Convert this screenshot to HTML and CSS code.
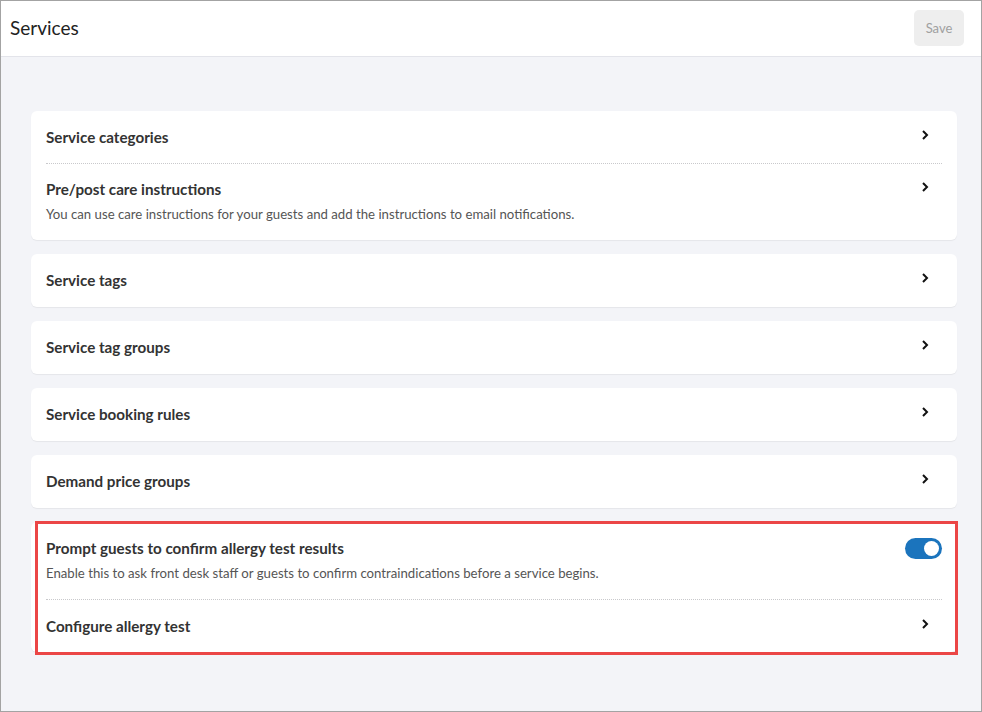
FILE: index.html
```html
<!DOCTYPE html>
<html lang="en">
<head>
    <meta charset="UTF-8">
    <meta name="viewport" content="width=device-width, initial-scale=1.0">
    <title>Services | Settings</title>
    <link rel="stylesheet" href="styles.css">
</head>
<body>
    <div class="frame">
        <header class="page-header">
            <h1>Services</h1>
            <button class="btn btn-save" disabled>Save</button>
        </header>

        <main class="content">
            <section class="card">
                <a class="row" href="#">
                    <div class="row-text">
                        <span class="row-title">Service categories</span>
                    </div>
                    <svg class="chevron" width="8" height="10" viewBox="0 0 8 10" aria-hidden="true"><polyline points="2,1 6,5 2,9" /></svg>
                </a>
                <a class="row" href="#">
                    <div class="row-text">
                        <span class="row-title">Pre/post care instructions</span>
                        <span class="row-desc">You can use care instructions for your guests and add the instructions to email notifications.</span>
                    </div>
                    <svg class="chevron" width="8" height="10" viewBox="0 0 8 10" aria-hidden="true"><polyline points="2,1 6,5 2,9" /></svg>
                </a>
            </section>

            <section class="card">
                <a class="row" href="#">
                    <div class="row-text">
                        <span class="row-title">Service tags</span>
                    </div>
                    <svg class="chevron" width="8" height="10" viewBox="0 0 8 10" aria-hidden="true"><polyline points="2,1 6,5 2,9" /></svg>
                </a>
            </section>

            <section class="card">
                <a class="row" href="#">
                    <div class="row-text">
                        <span class="row-title">Service tag groups</span>
                    </div>
                    <svg class="chevron" width="8" height="10" viewBox="0 0 8 10" aria-hidden="true"><polyline points="2,1 6,5 2,9" /></svg>
                </a>
            </section>

            <section class="card">
                <a class="row" href="#">
                    <div class="row-text">
                        <span class="row-title">Service booking rules</span>
                    </div>
                    <svg class="chevron" width="8" height="10" viewBox="0 0 8 10" aria-hidden="true"><polyline points="2,1 6,5 2,9" /></svg>
                </a>
            </section>

            <section class="card">
                <a class="row" href="#">
                    <div class="row-text">
                        <span class="row-title">Demand price groups</span>
                    </div>
                    <svg class="chevron" width="8" height="10" viewBox="0 0 8 10" aria-hidden="true"><polyline points="2,1 6,5 2,9" /></svg>
                </a>
            </section>

            <section class="card card-highlight">
                <div class="row row-toggle">
                    <div class="row-text">
                        <span class="row-title">Prompt guests to confirm allergy test results</span>
                        <span class="row-desc">Enable this to ask front desk staff or guests to confirm contraindications before a service begins.</span>
                    </div>
                    <label class="switch">
                        <input type="checkbox" checked aria-label="Prompt guests to confirm allergy test results">
                        <span class="slider"></span>
                    </label>
                </div>
                <a class="row" href="#">
                    <div class="row-text">
                        <span class="row-title">Configure allergy test</span>
                    </div>
                    <svg class="chevron" width="8" height="10" viewBox="0 0 8 10" aria-hidden="true"><polyline points="2,1 6,5 2,9" /></svg>
                </a>
            </section>
        </main>
    </div>
</body>
</html>
```

FILE: styles.css
```css
:root {
    --page-bg: #f3f4f8;
    --text-color: #333333;
    --muted-text: #555555;
    --divider: #c9c9cc;
    --toggle-on: #1b74bd;
    --highlight: #eb4646;
}

* {
    box-sizing: border-box;
}

body {
    margin: 0;
    font-family: 'Lato', 'Open Sans', sans-serif;
    color: var(--text-color);
    background-color: #ffffff;
}

.frame {
    height: 712px;
    border: 1px solid #a3a3a3;
    background-color: var(--page-bg);
    overflow: hidden;
}

.page-header {
    display: flex;
    justify-content: space-between;
    align-items: center;
    height: 56px;
    padding: 0 17px 2px 9px;
    background-color: #ffffff;
    border-bottom: 1px solid #e3e4ea;
}

.page-header h1 {
    margin: 0;
    font-size: 19px;
    font-weight: 400;
    color: #222222;
}

.btn {
    font-family: inherit;
    border: none;
    cursor: pointer;
}

.btn-save {
    width: 50px;
    height: 36px;
    border-radius: 5px;
    background-color: #eeeeee;
    color: #a0a0a0;
    font-size: 13px;
    cursor: default;
}

.content {
    display: flex;
    flex-direction: column;
    gap: 14px;
    padding: 54px 24px 0 30px;
}

.card {
    background-color: #ffffff;
    border-radius: 6px;
    box-shadow: 0 1px 1px rgba(0, 0, 0, 0.06);
}

.row {
    display: flex;
    align-items: flex-start;
    justify-content: space-between;
    margin: 0 15px;
    padding: 16px 0;
    color: inherit;
    text-decoration: none;
}

.row + .row {
    border-top: 1px dotted var(--divider);
    padding: 15px 0 17px;
}

.card-highlight .row + .row {
    padding: 16px 0;
}

.row-toggle {
    padding-bottom: 17px;
}

.card:not(.card-highlight):not(:first-child) .row {
    padding-bottom: 17px;
}

.row-text {
    display: flex;
    flex-direction: column;
    gap: 6px;
}

.row-title {
    font-size: 15.2px;
    font-weight: 700;
    line-height: 20px;
}

.row-desc {
    font-size: 13.2px;
    line-height: 18px;
    color: var(--muted-text);
}

.chevron {
    margin: 3px 13px 0 0;
    fill: none;
    stroke: #111111;
    stroke-width: 2;
}

.switch {
    position: relative;
    display: inline-block;
    width: 37px;
    height: 21px;
    flex-shrink: 0;
}

.switch input {
    opacity: 0;
    width: 0;
    height: 0;
}

.slider {
    position: absolute;
    inset: 0;
    border-radius: 11px;
    background-color: #c4c4c4;
}

.slider::before {
    content: "";
    position: absolute;
    top: 3px;
    left: 3px;
    width: 15px;
    height: 15px;
    border-radius: 50%;
    background-color: #ffffff;
}

.switch input:checked + .slider {
    background-color: var(--toggle-on);
}

.switch input:checked + .slider::before {
    left: 19px;
}

/* annotation outline around the allergy section */
.card-highlight {
    position: relative;
}

.card-highlight::after {
    content: "";
    position: absolute;
    top: -1px;
    left: 4px;
    right: -1px;
    bottom: -3px;
    border: 3px solid var(--highlight);
    pointer-events: none;
}
```
